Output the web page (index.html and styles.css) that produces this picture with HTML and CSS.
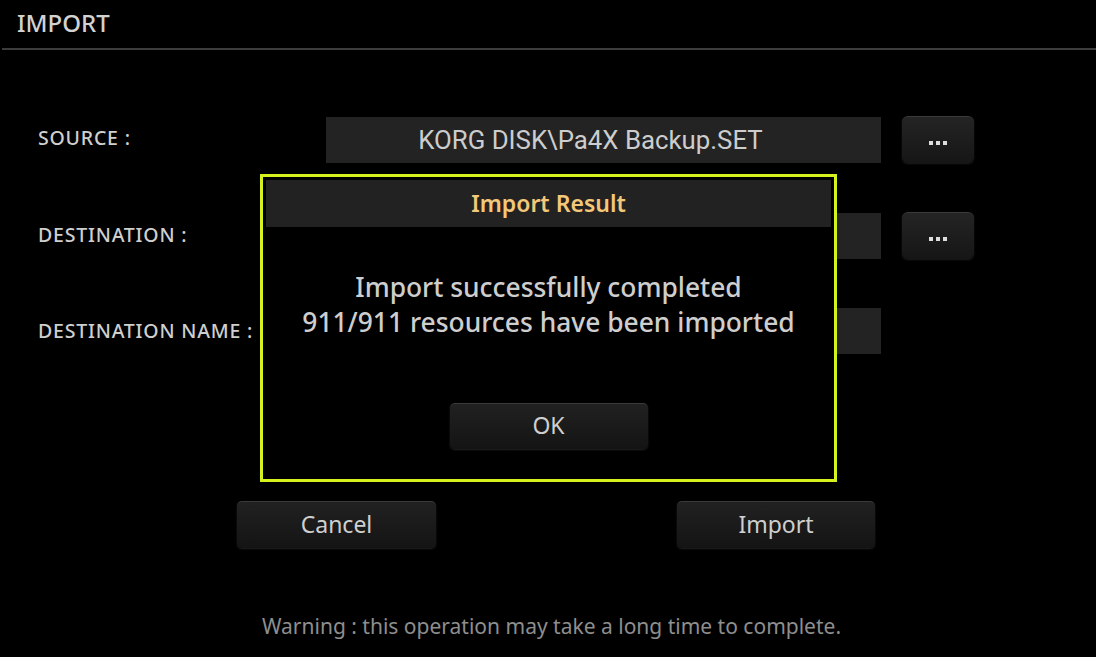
FILE: index.html
```html
<!DOCTYPE html>
<html>
<head>
<meta charset="utf-8">
<link rel="stylesheet" href="styles.css">
</head>
<body>
<div class="screen">
  <header class="titlebar"><h1 class="title">IMPORT</h1></header>
  <div class="form">
    <div class="row">
      <div class="label">SOURCE :</div>
      <div class="field">KORG DISK\Pa4X Backup.SET</div>
      <div class="browse"><span class="dot"></span><span class="dot"></span><span class="dot"></span></div>
    </div>
    <div class="row">
      <div class="label">DESTINATION :</div>
      <div class="field"></div>
      <div class="browse"><span class="dot"></span><span class="dot"></span><span class="dot"></span></div>
    </div>
    <div class="row">
      <div class="label">DESTINATION NAME :</div>
      <div class="field"></div>
    </div>
  </div>
  <div class="actions">
    <button class="btn btn-cancel">Cancel</button>
    <button class="btn btn-import">Import</button>
  </div>
  <p class="warning">Warning : this operation may take a long time to complete.</p>

  <div class="dialog">
    <div class="dialog-head">Import Result</div>
    <div class="dialog-body">
      <p class="msg">Import successfully completed<br>911/911 resources have been imported</p>
      <button class="btn btn-ok">OK</button>
    </div>
  </div>
</div>
</body>
</html>
```

FILE: styles.css
```css
* { box-sizing: border-box; }
html, body {
  margin: 0;
  padding: 0;
  background: #000;
}
body {
  width: 1096px;
  height: 657px;
  overflow: hidden;
  font-family: "Noto Sans", "Open Sans", sans-serif;
  color: #cfcfcf;
}
.screen {
  position: relative;
  width: 1096px;
  height: 657px;
  display: flex;
  flex-direction: column;
}
.titlebar {
  height: 50px;
  margin-left: 2px;
  border-bottom: 2px solid #3c3c3c;
  padding-left: 15px;
}
.title {
  margin: 0;
  font-size: 24px;
  font-weight: 500;
  line-height: 46px;
  color: #d2d2d2;
}
.form {
  margin-top: 66px;
  display: flex;
  flex-direction: column;
  gap: 50px;
}
.row {
  display: grid;
  grid-template-columns: 305px 555px 72px;
  column-gap: 21px;
  height: 46px;
  align-items: center;
}
.label {
  padding-left: 38px;
  font-size: 19.5px;
  font-weight: 500;
  color: #cfcfcf;
  letter-spacing: 0.8px;
  white-space: nowrap;
  position: relative;
  top: -2px;
}
.row:nth-child(2) .label, .row:nth-child(3) .label { top: -1px; }
.field {
  height: 46px;
  background: #232323;
  font-family: Roboto, "Noto Sans", sans-serif;
  font-size: 25.8px;
  color: #cdcdcd;
  text-align: center;
  line-height: 46px;
  padding-right: 26px;
}
.browse {
  height: 47px;
  border-radius: 6px;
  background: linear-gradient(#242424, #161616);
  border-top: 1px solid #3a3a3a;
  box-shadow: 0 1px 2px rgba(60,60,60,0.5);
  display: flex;
  align-items: center;
  justify-content: center;
  gap: 3px;
  padding-top: 6px;
}
.dot {
  width: 4px;
  height: 4px;
  background: #ddd;
}
.actions {
  margin-top: 147px;
  display: flex;
  padding-left: 237px;
  gap: 241px;
}
.btn {
  font-family: "Noto Sans", "Open Sans", sans-serif;
  width: 199px;
  height: 47px;
  border-radius: 5px;
  border: none;
  border-top: 1px solid #3a3a3a;
  background: linear-gradient(#212121, #141414);
  box-shadow: 0 1px 2px rgba(70,70,70,0.5);
  color: #cfcfcf;
  font-size: 23px;
  font-weight: 400;
  padding: 0 0 3px 0;
}
.btn-import { width: 198px; }
.warning {
  margin: 64px 0 0 0;
  text-align: center;
  padding-left: 7px;
  font-size: 21px;
  font-weight: 400;
  color: #8e8e8e;
}
.dialog {
  position: absolute;
  left: 260px;
  top: 174px;
  width: 577px;
  height: 308px;
  border: 3px solid #d6f21e;
  background: #000;
  padding: 3px;
  display: flex;
  flex-direction: column;
}
.dialog-head {
  height: 47px;
  background: #222;
  color: #f3c878;
  font-size: 23px;
  font-weight: 600;
  text-align: center;
  line-height: 46px;
}
.dialog-body {
  display: flex;
  flex-direction: column;
  align-items: center;
}
.msg {
  margin: 43px 0 0 0;
  text-align: center;
  font-size: 26.4px;
  line-height: 35px;
  color: #cecece;
  font-weight: 500;
}
.btn-ok {
  margin-top: 63px;
  width: 198px;
  height: 46px;
  font-size: 23px;
}
```
